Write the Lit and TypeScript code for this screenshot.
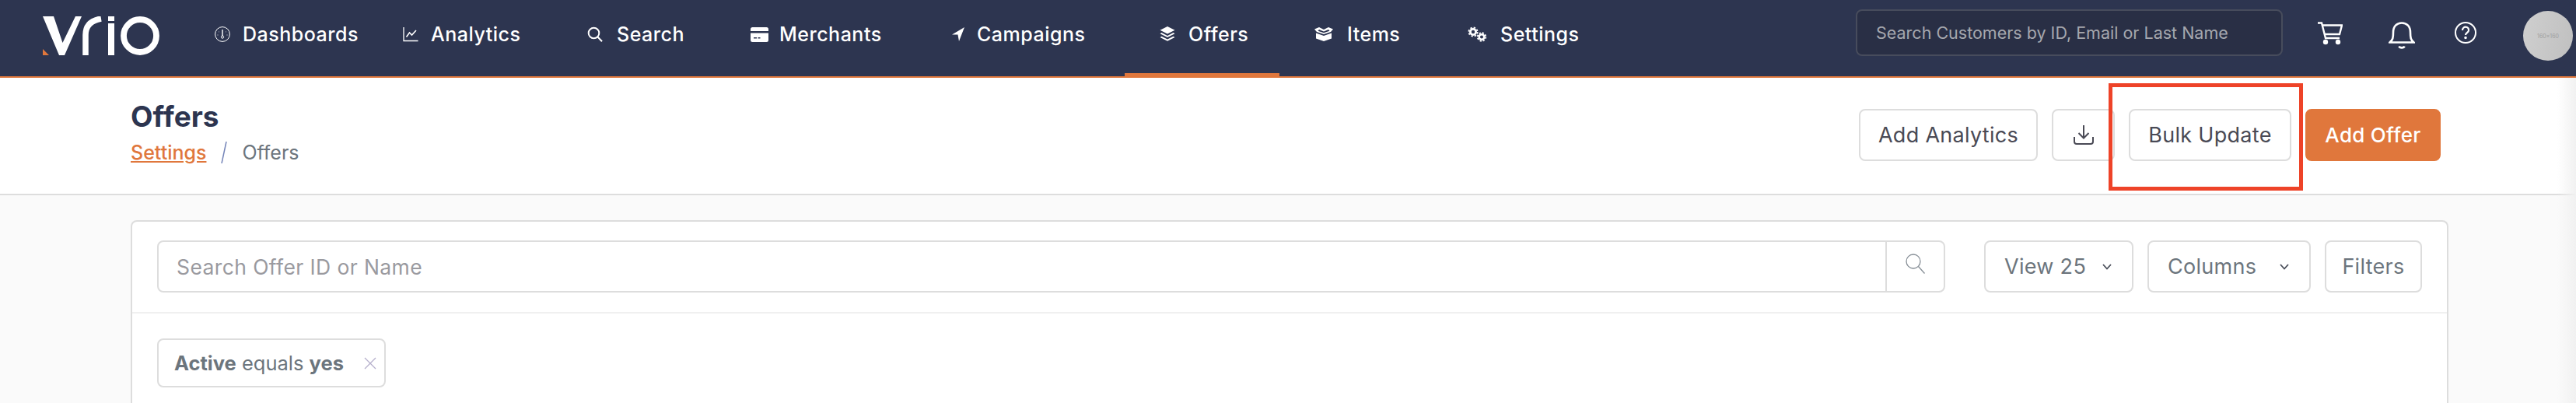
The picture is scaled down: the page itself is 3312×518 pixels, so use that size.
import { LitElement, html, css, svg } from "lit";
import { customElement } from "lit/decorators.js";

const icons: Record<string, unknown> = {
  dash: svg`<svg width="20" height="20" viewBox="0 0 20 20" fill="none" stroke="#fff" stroke-width="1"><circle cx="10" cy="10" r="9.400"/><path d="M10 4v8" stroke-width="1.400"/><circle cx="10" cy="13.600" r="1.600"/><path d="M5 6.500l.6.5M15 6.500l-.6.5M3.600 11h.8M15.600 11h.8" /></svg>`,
  analytics: svg`<svg width="20" height="20" viewBox="0 0 20 20" fill="none" stroke="#fff" stroke-width="1.300"><path d="M1 1v17.500h18.500"/><path d="M4.500 13.500l4-5.500 3 3 5.500-6" stroke-width="1.600"/></svg>`,
  search: svg`<svg width="20" height="20" viewBox="0 0 20 20" fill="none" stroke="#fff" stroke-width="2"><circle cx="8.500" cy="8.500" r="6.800"/><path d="M13.500 13.500l5.500 5.800"/></svg>`,
  card: svg`<svg width="23" height="19" viewBox="0 0 23 19"><path fill="#fff" d="M2.500 0h18A2.500 2.500 0 0 1 23 2.500V5H0V2.500A2.500 2.500 0 0 1 2.500 0zM0 7.500h23V16.500a2.500 2.500 0 0 1-2.500 2.500h-18A2.500 2.500 0 0 1 0 16.500z"/><path fill="#2d3550" d="M4 13h4v1.500H4zM9.500 13h3v1.500h-3z"/></svg>`,
  plane: svg`<svg width="16" height="18" viewBox="0 0 16 18"><path fill="#fff" d="M16 0L0 9.500h7.500L9 18z"/></svg>`,
  layers: svg`<svg width="22" height="20" viewBox="0 0 22 20" fill="#fff"><path d="M11 0l9.500 4.800L11 9.600 1.500 4.800z"/><path d="M3.500 8.100l7.500 3.800 7.500-3.800 2 1.100L11 14 1.500 9.200z"/><path d="M3.500 12.800l7.500 3.800 7.500-3.800 2 1.100L11 18.800 1.500 13.900z"/></svg>`,
  box: svg`<svg width="24" height="18" viewBox="0 0 24 18" fill="#fff"><path d="M2 7.500L12 11 22 7.500V14.500L12 18 2 14.500z"/><path d="M0 2.500L6 0l6 3L18 0l6 2.500L21 6l-9 3-9-3zM6 3L4.500 4.800 12 7.200l7.500-2.400L18 3l-6 2.500z"/></svg>`,
  gears: svg`<svg width="25" height="20" viewBox="0 0 25 20" fill="none" stroke="#fff"><circle cx="7" cy="7" r="3.600" stroke-width="2.800"/><circle cx="7" cy="7" r="5.600" stroke-width="1.800" stroke-dasharray="2.400 2.000"/><circle cx="18" cy="13.500" r="3.300" stroke-width="2.600"/><circle cx="18" cy="13.500" r="5.300" stroke-width="1.800" stroke-dasharray="2.300 1.860"/></svg>`,
};

const nav = [
  { i: "dash", t: "Dashboards", w: 242, p: 44, g: 16 },
  { i: "analytics", t: "Analytics", w: 237, p: 44, g: 16 },
  { i: "search", t: "Search", w: 210, p: 44, g: 18 },
  { i: "card", t: "Merchants", w: 259, p: 44, g: 14 },
  { i: "plane", t: "Campaigns", w: 266, p: 44, g: 16 },
  { i: "layers", t: "Offers", w: 199, p: 44, g: 16, active: true },
  { i: "box", t: "Items", w: 198, p: 45, g: 18 },
  { i: "gears", t: "Settings", w: 240, p: 44, g: 17 },
];

@customElement("app-root")
export class AppRoot extends LitElement {
  static styles = css`
    :host { display: block; width: 3312px; height: 518px; overflow: hidden; position: relative; background: #fafafa;
      font-family: Inter, "Liberation Sans", sans-serif; color: #4a4a55; }
    .top { height: 98px; background: #2d3550; border-bottom: 2px solid #e0773c; display: flex; align-items: stretch; }
    .logo { width: 232px; flex: none; display: flex; align-items: flex-start; padding: 21px 0 0 55px; box-sizing: border-box; }
    .nav { display: flex; width: 2154px; flex: none; }
    .item { display: flex; align-items: center; box-sizing: border-box; color: #fff; font-size: 25px; font-weight: 500; letter-spacing: .5px;
      border-bottom: 4px solid transparent; padding-bottom: 6px; white-space: nowrap; }
    .item.active { border-bottom-color: #e0773c; }
    .ic { display: flex; flex: none; }
    .gs { width: 549px; height: 60px; margin-top: 12px; box-sizing: border-box; background: #292f45; border: 2px solid #474c5c; border-radius: 8px;
      color: #a5a7ae; font-size: 21.500px; display: flex; align-items: center; padding-left: 24px; flex: none; }
    .tools { display: flex; flex: none; align-items: flex-start; }
    .tools svg { display: block; }
    .cart { margin: 28px 0 0 45px; }
    .bell { margin: 28px 0 0 59px; }
    .help { margin: 28px 0 0 51px; }
    .avatar { width: 64px; height: 64px; margin: 14px 0 0 60px; border-radius: 50%; background: linear-gradient(100deg,#cfcfcf,#c0c0c0);
      color: #a0a0a0; font-size: 7px; display: flex; align-items: center; justify-content: center; flex: none; }
    .head { height: 149px; background: #fff; border-bottom: 2px solid #ddd; display: flex; justify-content: space-between; padding: 0 174px 0 168px; }
    h1 { margin: 28px 0 0; font-size: 37px; line-height: 44px; font-weight: 700; color: #2d3550; }
    .crumb { display: flex; align-items: center; margin-top: 8px; font-size: 25px; line-height: 32px; color: #6c757d; }
    .crumb a { color: #e0773c; text-decoration: underline; font-weight: 500; }
    .crumb svg { margin: 0 18px; }
    .actions { display: flex; gap: 18px; padding-top: 40px; }
    .btn { height: 67px; box-sizing: border-box; border: 2px solid #ddd; background: #fff; border-radius: 8px; display: flex; align-items: center; justify-content: center;
      font-size: 27px; letter-spacing: .3px; color: #4a4a55; }
    .btn.primary { background: #e0773c; border-color: #e0773c; color: #fff; font-weight: 500; font-size: 26px; }
    .w230 { width: 230px; } .w81 { width: 81px; } .w209 { width: 209px; } .w174 { width: 174px; }
    .card { margin: 32px 0 0 168px; width: 2980px; height: 400px; box-sizing: border-box; background: #fff; border: 2px solid #ddd; border-bottom: 0; border-radius: 8px 8px 0 0; }
    .bar { height: 118px; box-sizing: border-box; border-bottom: 2px solid #f0f0f0; padding: 24px 32px 0; display: flex; }
    .search { width: 2299px; height: 67px; box-sizing: border-box; border: 2px solid #ddd; border-radius: 8px; display: flex; flex: none; }
    .ph { flex: 1; display: flex; align-items: center; padding-left: 23px; color: #9a9a9f; font-size: 26.500px; letter-spacing: .4px; }
    .sb { width: 75px; border-left: 2px solid #ddd; display: flex; justify-content: center; padding-top: 15px; box-sizing: border-box; }
    .filters { display: flex; gap: 18px; margin-left: 50px; }
    .filters .btn { color: #6c757d; }
    .filters .dd { justify-content: flex-start; padding-left: 24px; }
    .filters .dd svg { margin-left: auto; margin-right: 26px; }
    .w192 { width: 192px; } .w210 { width: 210px; } .w125 { width: 125px; }
    .chips { padding: 32px 32px 0; }
    .chip { width: 294px; height: 63px; box-sizing: border-box; border: 2px solid #ddd; border-radius: 8px; display: flex; align-items: center; padding: 0 10px 0 20px; justify-content: space-between;
      font-size: 25.500px; color: #6c757d; }
    .chip b { font-weight: 700; }
    .strip { position: absolute; right: 0; top: 100px; bottom: 0; width: 24px; background: linear-gradient(90deg, rgba(240,240,240,0), #f1f1f1); }
    .mark { position: absolute; left: 2711px; top: 107px; width: 250px; height: 138px; box-sizing: border-box; border: 5px solid #ee4328; }
  `;

  render() {
    return html`
      <div class="top">
        <div class="logo">
          <svg width="150" height="50" viewBox="0 0 150 50" fill="none">
            <path fill="#fff" d="M0 0h14l11.500 34L42 0h8L28 50h-7z"/>
            <path d="M55 50V24C55 11 63 5 75 3" stroke="#fff" stroke-width="7.500"/>
            <path fill="#fff" d="M84 9h8v41h-8zM84 0h8v6h-8z"/>
            <circle cx="125" cy="25" r="21" stroke="#fff" stroke-width="7.800"/>
            <path fill="#e0773c" d="M0 42l8 8H0z"/>
          </svg>
        </div>
        <div class="nav">
          ${nav.map((n) => html`<div class="item ${n.active ? "active" : ""}" style="width:${n.w}px;padding-left:${n.p}px;gap:${n.g}px">
            <span class="ic">${icons[n.i]}</span><span>${n.t}</span></div>`)}
        </div>
        <div class="gs">Search Customers by ID, Email or Last Name</div>
        <div class="tools">
          <svg class="cart" width="32" height="30" viewBox="0 0 32 30" fill="none" stroke="#fff" stroke-width="2.400"><path d="M0 1.500h5L10 21h18"/><path d="M6 4.500h25l-3 11.500H9"/><circle cx="10" cy="26" r="2" fill="#fff"/><circle cx="26" cy="26" r="2" fill="#fff"/></svg>
          <svg class="bell" width="34" height="36" viewBox="0 0 34 36" fill="none" stroke="#fff" stroke-width="2.600"><path d="M1.500 26.500c4-3 4.500-6 4.500-13C6 6 10.500 1.500 17 1.500S28 6 28 13.500c0 7 .5 10 4.500 13z"/><path d="M13.500 31.500c1 2.500 6 2.500 7 0"/></svg>
          <svg class="help" width="28" height="28" viewBox="0 0 28 28" fill="none" stroke="#fff" stroke-width="2"><circle cx="14" cy="14" r="13"/><path d="M10 11c0-6 8.500-5.500 8 0 0 3-4 3-4 6" stroke-width="2.200"/><circle cx="14" cy="20.500" r=".8" fill="#fff"/></svg>
          <div class="avatar">160×160</div>
        </div>
      </div>
      <div class="head">
        <div>
          <h1>Offers</h1>
          <div class="crumb"><a>Settings</a>
            <svg width="10" height="28" viewBox="0 0 10 28" fill="none" stroke="#7484b8" stroke-width="1.500"><path d="M8 0L2 28"/></svg>
            <span>Offers</span></div>
        </div>
        <div class="actions">
          <div class="btn w230">Add Analytics</div>
          <div class="btn w81"><svg width="26" height="25" viewBox="0 0 26 25" fill="none" stroke="#4a4a55" stroke-width="2"><path d="M13 0v16M6.500 10l6.500 6.500 6.500-6.500"/><path d="M1 15v6a3 3 0 0 0 3 3h18a3 3 0 0 0 3-3v-6"/></svg></div>
          <div class="btn w209">Bulk Update</div>
          <div class="btn primary w174">Add Offer</div>
        </div>
      </div>
      <div class="card">
        <div class="bar">
          <div class="search"><div class="ph">Search Offer ID or Name</div>
            <div class="sb"><svg width="26" height="26" viewBox="0 0 26 26" fill="none" stroke="#868e96" stroke-width="1.300"><circle cx="10" cy="10" r="9"/><path d="M16.500 16.500l8 9"/></svg></div>
          </div>
          <div class="filters">
            <div class="btn dd w192">View 25 <svg width="12" height="8" viewBox="0 0 12 8" fill="none" stroke="#4a4f5a" stroke-width="1.800"><path d="M1 1l5 5.500L11 1"/></svg></div>
            <div class="btn dd w210">Columns <svg width="12" height="8" viewBox="0 0 12 8" fill="none" stroke="#4a4f5a" stroke-width="1.800"><path d="M1 1l5 5.500L11 1"/></svg></div>
            <div class="btn w125">Filters</div>
          </div>
        </div>
        <div class="chips">
          <div class="chip"><span><b>Active</b> equals <b>yes</b></span>
            <svg width="16" height="16" viewBox="0 0 16 16" fill="none" stroke="#b5b0cc" stroke-width="1.300"><path d="M1 1l14 14M15 1L1 15"/></svg></div>
        </div>
      </div>
      <div class="strip"></div>
      <div class="mark"></div>
    `;
  }
}
